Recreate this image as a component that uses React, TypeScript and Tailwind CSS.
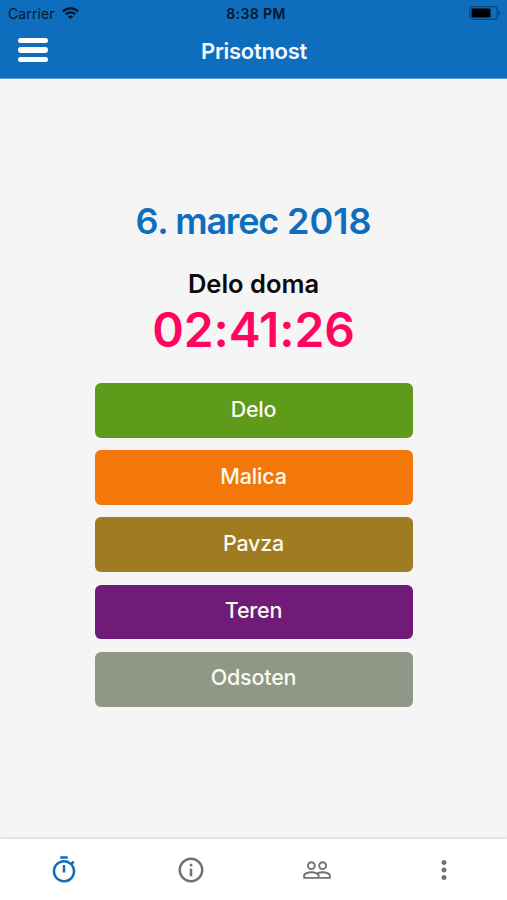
import { useState } from 'react';
import clsx from 'clsx';
import { MdInfoOutline, MdMoreVert, MdOutlineTimer, MdPeopleOutline } from 'react-icons/md';

const actions = [
  { label: 'Delo', className: 'bg-[#5e9b1b]' },
  { label: 'Malica', className: 'bg-[#f37709]' },
  { label: 'Pavza', className: 'bg-[#9f7b21]' },
  { label: 'Teren', className: 'bg-[#711b78]' },
  { label: 'Odsoten', className: 'bg-[#919787]' },
];

const tabs = [
  { id: 'timer', label: 'Prisotnost', Icon: MdOutlineTimer },
  { id: 'info', label: 'Info', Icon: MdInfoOutline },
  { id: 'people', label: 'Sodelavci', Icon: MdPeopleOutline },
  { id: 'more', label: 'Več', Icon: MdMoreVert },
];

const WifiIcon = () => (
  <svg viewBox="0 0 17 12" className="ml-[7px] h-3 w-[17px]" fill="none" stroke="currentColor" strokeWidth="2.3">
    <path d="M0.9 4.4C5.1 0.3 11.9 0.3 16.1 4.4" />
    <path d="M3.7 7.4C6.5 4.8 10.5 4.8 13.3 7.4" />
    <path d="M8.5 12L5.8 9.4C7.3 8.1 9.7 8.1 11.2 9.4Z" fill="currentColor" stroke="none" />
  </svg>
);

const BatteryIcon = () => (
  <svg viewBox="0 0 32 14" className="h-3.5 w-8" fill="none">
    <rect x="0.7" y="0.7" width="27.6" height="12.6" rx="3" stroke="#07457c" strokeWidth="1.2" />
    <rect x="2.5" y="2.5" width="19" height="9" rx="1" fill="#000" />
    <path d="M29.5 4.5C31.6 5.3 31.6 8.7 29.5 9.5Z" fill="#07457c" />
  </svg>
);

const StatusBar = () => (
  <div className="grid h-[26px] grid-cols-3 items-center pr-[6px] pl-2 text-[#03182c]">
    <div className="flex items-center">
      <span className="pt-[2px] text-[14px] leading-none tracking-[0.1px]">Carrier</span>
      <WifiIcon />
    </div>
    <span className="pt-[2px] pl-[3px] text-center text-[14px] leading-none font-semibold tracking-[0.4px]">8:38 PM</span>
    <div className="flex justify-end">
      <BatteryIcon />
    </div>
  </div>
);

const App = () => {
  const [activeTab, setActiveTab] = useState('timer');

  return (
    <div className="flex h-[900px] w-full flex-col bg-[#f5f5f5] font-['Inter',sans-serif]">
      <header className="h-[79px] border-b border-[#5ca0d8] bg-[#0f6dbd]">
        <StatusBar />
        <div className="grid h-[49px] grid-cols-3 items-center px-[18px]">
          <button aria-label="Meni" className="mb-px flex w-[30px] flex-col gap-[4px]">
            <span className="h-[5.3px] rounded-full bg-white" />
            <span className="h-[5.3px] rounded-full bg-white" />
            <span className="h-[5.3px] rounded-full bg-white" />
          </button>
          <h1 className="pl-px text-center text-[22px] leading-none font-semibold tracking-[-0.3px] text-[#f2faff]">Prisotnost</h1>
        </div>
      </header>

      <main className="flex flex-1 flex-col items-center pt-[120px]">
        <h2 className="text-[36px] leading-[44px] font-semibold text-[#0f6dbd]">
          6. <span className="-ml-[2px] tracking-[-1.2px]">marec</span> 2018
        </h2>
        <p className="mt-[25px] text-[25.5px] leading-[32px] font-semibold text-[#0a0a0a]">Delo doma</p>
        <p className="pt-px text-[48px] leading-[58px] font-semibold tracking-[-0.1px] text-[#ff0560]">02:41:26</p>
        <div className="mt-[24px] flex w-[318px] flex-col gap-[12.4px]">
          {actions.map(({ label, className }) => (
            <button
              key={label}
              className={clsx(
                'h-[54.8px] rounded-md pb-[2px] text-[21.5px] leading-none font-medium tracking-[-0.2px] text-[#fafaf0]',
                className
              )}
            >
              {label}
            </button>
          ))}
        </div>
      </main>

      <nav className="grid h-[61px] grid-cols-[127.5px_126px_126.5px_127px] bg-white shadow-[0_-1px_3px_rgba(0,0,0,0.14)]">
        {tabs.map(({ id, label, Icon }) => (
          <button
            key={id}
            aria-label={label}
            onClick={() => setActiveTab(id)}
            className={clsx(
              'flex items-center justify-center',
              activeTab === id ? 'pl-px text-[#0f6dbd]' : 'text-[#717171]'
            )}
          >
            <Icon className="size-[30px]" />
          </button>
        ))}
      </nav>
    </div>
  );
};

export default App;
